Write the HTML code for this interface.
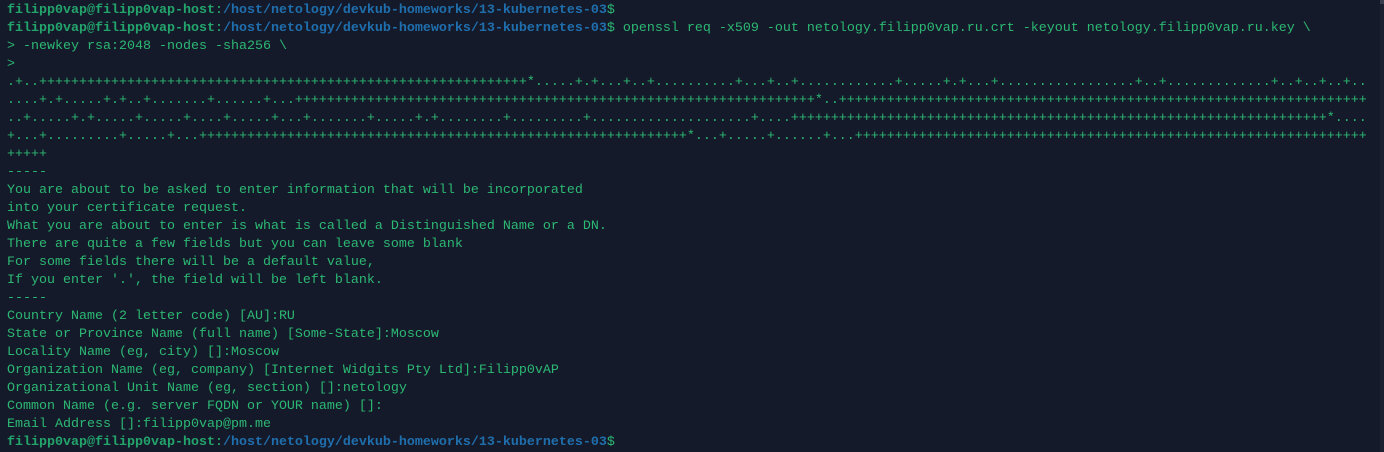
<!DOCTYPE html>
<html><head><meta charset="utf-8"><style>
html,body{margin:0;padding:0;background:#151a2b;width:1384px;height:452px;overflow:hidden}
pre{margin:0;padding:2px 0 0 7px;font-family:"Liberation Mono",monospace;font-size:13.33px;line-height:18px;color:#2cb873;white-space:pre}
.u{font-weight:bold;color:#23a46b}
.p{font-weight:bold;color:#1f6fad}
.sb{position:absolute;right:0;top:0;width:4px;height:452px;background:#1b2030}
.th{position:absolute;right:0;top:0;width:4px;height:4px;background:#3a3f4d}
</style></head><body><pre><span class="u">filipp0vap@filipp0vap-host</span>:<span class="p">/host/netology/devkub-homeworks/13-kubernetes-03</span>$
<span class="u">filipp0vap@filipp0vap-host</span>:<span class="p">/host/netology/devkub-homeworks/13-kubernetes-03</span>$ openssl req -x509 -out netology.filipp0vap.ru.crt -keyout netology.filipp0vap.ru.key \
&gt; -newkey rsa:2048 -nodes -sha256 \
&gt;
.+..+++++++++++++++++++++++++++++++++++++++++++++++++++++++++++++*.....+.+...+..+..........+...+..+............+.....+.+...+.................+..+.............+..+..+..+..
....+.+.....+.+..+.......+......+...+++++++++++++++++++++++++++++++++++++++++++++++++++++++++++++++++*..++++++++++++++++++++++++++++++++++++++++++++++++++++++++++++++++++
..+.....+.+.....+.....+....+.....+...+.......+.....+.+........+.........+....................+....+++++++++++++++++++++++++++++++++++++++++++++++++++++++++++++++++++*....
+...+.........+.....+...+++++++++++++++++++++++++++++++++++++++++++++++++++++++++++++*...+.....+......+...++++++++++++++++++++++++++++++++++++++++++++++++++++++++++++++++
+++++
-----
You are about to be asked to enter information that will be incorporated
into your certificate request.
What you are about to enter is what is called a Distinguished Name or a DN.
There are quite a few fields but you can leave some blank
For some fields there will be a default value,
If you enter '.', the field will be left blank.
-----
Country Name (2 letter code) [AU]:RU
State or Province Name (full name) [Some-State]:Moscow
Locality Name (eg, city) []:Moscow
Organization Name (eg, company) [Internet Widgits Pty Ltd]:Filipp0vAP
Organizational Unit Name (eg, section) []:netology
Common Name (e.g. server FQDN or YOUR name) []:
Email Address []:filipp0vap@pm.me
<span class="u">filipp0vap@filipp0vap-host</span>:<span class="p">/host/netology/devkub-homeworks/13-kubernetes-03</span>$</pre>
<div class="sb"></div><div class="th"></div>
</body></html>
